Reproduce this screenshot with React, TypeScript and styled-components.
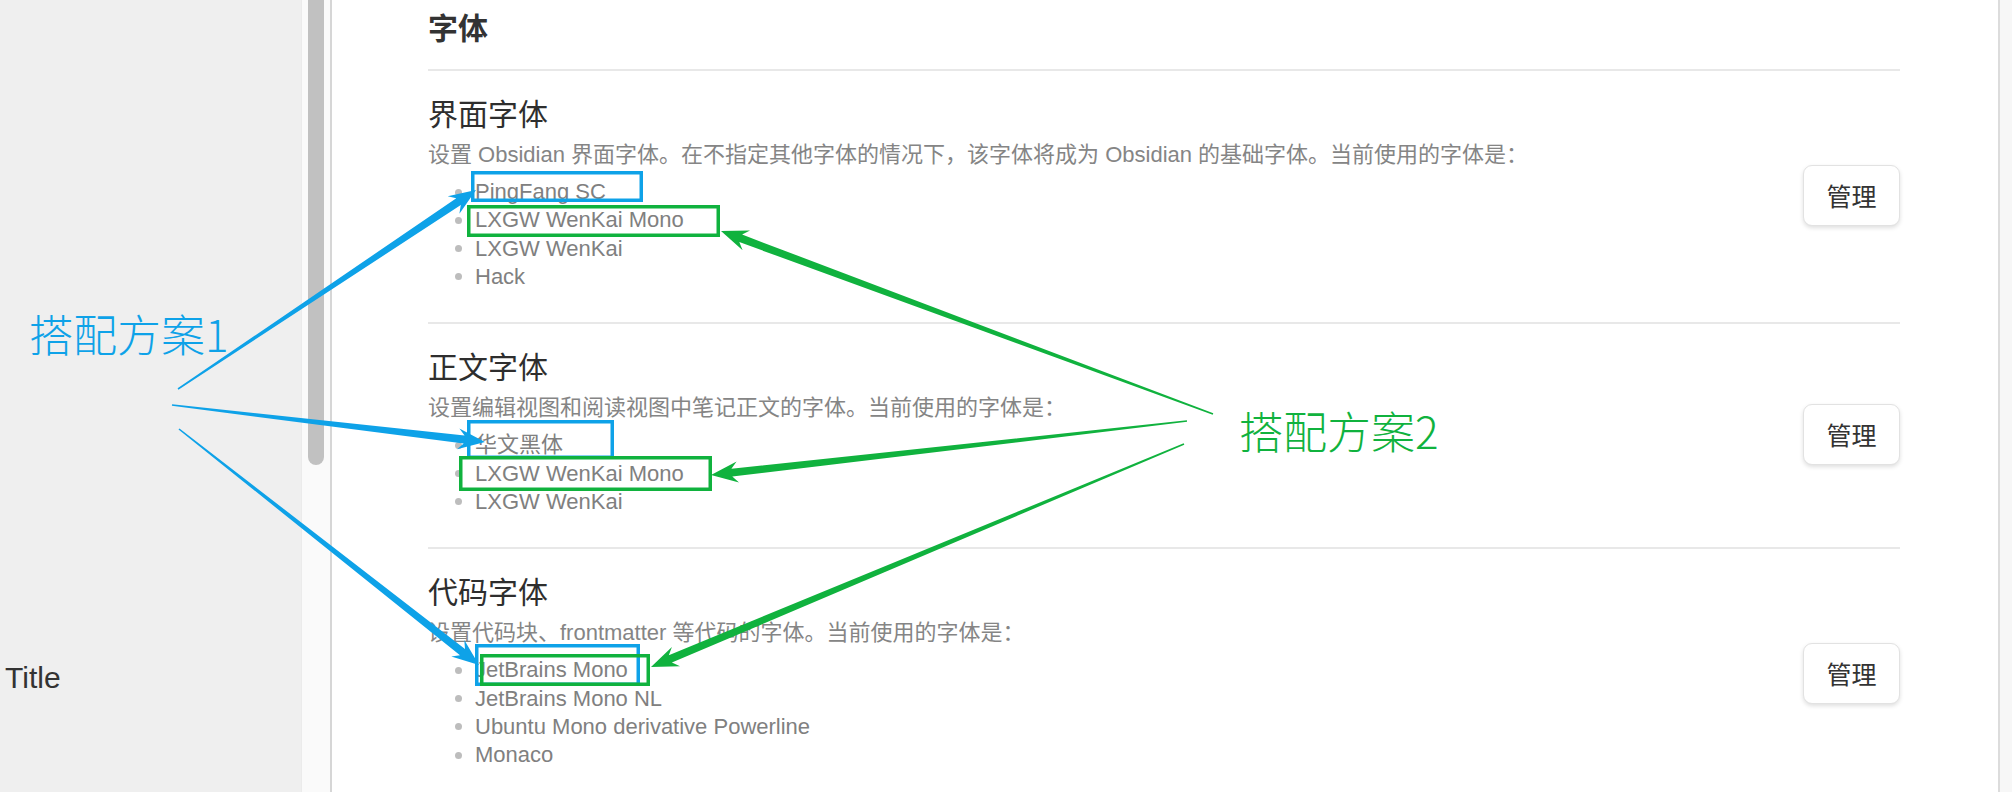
import React from 'react'
import styled, { createGlobalStyle } from 'styled-components'

type FontSetting = {
    name: string
    description: string
    fonts: Array<string>
}

type Arrow = {
    from: [number, number]
    to: [number, number]
    color: string
}

type Box = {
    x1: number
    y1: number
    x2: number
    y2: number
    color: string
}

const BLUE = '#0ea2e8'
const GREEN = '#10b23e'

const settings: Array<FontSetting> = [
    {
        name: '界面字体',
        description:
            '设置 Obsidian 界面字体。在不指定其他字体的情况下，该字体将成为 Obsidian 的基础字体。当前使用的字体是：',
        fonts: ['PingFang SC', 'LXGW WenKai Mono', 'LXGW WenKai', 'Hack'],
    },
    {
        name: '正文字体',
        description: '设置编辑视图和阅读视图中笔记正文的字体。当前使用的字体是：',
        fonts: ['华文黑体', 'LXGW WenKai Mono', 'LXGW WenKai'],
    },
    {
        name: '代码字体',
        description: '设置代码块、frontmatter 等代码的字体。当前使用的字体是：',
        fonts: ['JetBrains Mono', 'JetBrains Mono NL', 'Ubuntu Mono derivative Powerline', 'Monaco'],
    },
]

const boxes: Array<Box> = [
    { x1: 471, y1: 171, x2: 643, y2: 202, color: BLUE },
    { x1: 467, y1: 205, x2: 720, y2: 237, color: GREEN },
    { x1: 467, y1: 420, x2: 614, y2: 459, color: BLUE },
    { x1: 459, y1: 456, x2: 712, y2: 491, color: GREEN },
    { x1: 475, y1: 644, x2: 640, y2: 686, color: BLUE },
    { x1: 480, y1: 654, x2: 650, y2: 686, color: GREEN },
]

const arrows: Array<Arrow> = [
    { from: [178, 389], to: [476, 190], color: BLUE },
    { from: [172, 405], to: [485, 442], color: BLUE },
    { from: [179, 429], to: [479, 665], color: BLUE },
    { from: [1213, 414], to: [721, 231], color: GREEN },
    { from: [1187, 421], to: [711, 475], color: GREEN },
    { from: [1184, 444], to: [651, 667], color: GREEN },
]

const GlobalStyle = createGlobalStyle`
    html, body {
        margin: 0;
        padding: 0;
        background: #ffffff;
        overflow: hidden;
    }
`

const Page = styled.div`
    position: relative;
    display: flex;
    width: 2012px;
    height: 792px;
    overflow: hidden;
    font-family: 'Liberation Sans', 'Noto Sans CJK SC', sans-serif;
`

const Sidebar = styled.div`
    width: 301px;
    flex-shrink: 0;
    background: #efefef;
    padding-top: 660px;
    box-sizing: border-box;
`

const NavTitle = styled.div`
    padding-left: 5px;
    font-size: 30px;
    line-height: 36px;
    color: #333333;
`

const ScrollTrack = styled.div`
    width: 29px;
    flex-shrink: 0;
    box-sizing: border-box;
    background: #fafafa;
    border-left: 1px solid #ebebeb;
    padding-left: 6px;
`

const ScrollThumb = styled.div`
    width: 16px;
    height: 465px;
    background: #c1c1c1;
    border-radius: 0 0 8px 8px;
`

const SettingsPane = styled.div`
    flex: 1;
    background: #ffffff;
    border-left: 2px solid #d6d6d6;
    border-right: 2px solid #dcdcdc;
    padding: 0 98px 0 96px;
`

const Gutter = styled.div`
    width: 12px;
    flex-shrink: 0;
    background: #f7f7f7;
`

const SectionHeading = styled.div`
    padding: 8px 0 25px;
    font-size: 30px;
    line-height: 36px;
    font-weight: 700;
    color: #333333;
    font-family: 'Noto Sans CJK SC', sans-serif;
`

const SettingItem = styled.div`
    display: flex;
    align-items: center;
    border-top: 2px solid #e8e8e8;
    padding: 23px 0 31px;
`

const SettingInfo = styled.div`
    flex: 1;
`

const SettingName = styled.div`
    font-size: 30px;
    line-height: 36px;
    color: #2e2e2e;
    font-family: 'Noto Sans CJK SC', sans-serif;
`

const SettingDesc = styled.div`
    margin-top: 10px;
    font-size: 22px;
    line-height: 30px;
    color: #858585;
`

const FontList = styled.ul`
    list-style: none;
    margin: 8px 0 0;
    padding: 0;
`

const FontItem = styled.li`
    position: relative;
    padding-left: 47px;
    font-size: 22px;
    line-height: 28.33px;
    color: #808080;

    &::before {
        content: '';
        position: absolute;
        left: 27px;
        top: 10.5px;
        width: 7px;
        height: 7px;
        border-radius: 50%;
        background: #bdbdbd;
    }
`

const ManageButton = styled.button`
    width: 97px;
    height: 61px;
    margin-top: 5px;
    flex-shrink: 0;
    background: #ffffff;
    border: 1px solid #e2e2e2;
    border-radius: 9px;
    box-shadow: 0 2px 4px rgba(0, 0, 0, 0.13);
    font-family: 'Noto Sans CJK SC', sans-serif;
    font-size: 25px;
    color: #333333;
    cursor: pointer;
`

const AnnotationLayer = styled.svg`
    position: absolute;
    left: 0;
    top: 0;
    pointer-events: none;
`

const CalloutLabel = styled.div<{ $color: string; $left: number; $top: number }>`
    position: absolute;
    left: ${(p) => p.$left}px;
    top: ${(p) => p.$top}px;
    font-family: 'Noto Sans CJK SC', sans-serif;
    font-weight: 300;
    font-size: 44px;
    line-height: 44px;
    color: ${(p) => p.$color};
    white-space: nowrap;
`

// tapered arrow, thin at the tail and wider towards the head
const arrowPoints = ({ from, to }: Arrow): string => {
    const [x1, y1] = from
    const [x2, y2] = to
    const len = Math.hypot(x2 - x1, y2 - y1)
    const ux = (x2 - x1) / len
    const uy = (y2 - y1) / len
    const nx = -uy
    const ny = ux
    const w0 = 0.8
    const w1 = 4
    const headLen = 27
    const headHalf = 10.5
    const bx = x2 - ux * headLen
    const by = y2 - uy * headLen
    const ix = x2 - ux * (headLen - 6)
    const iy = y2 - uy * (headLen - 6)
    const pts = [
        [x1 + nx * w0, y1 + ny * w0],
        [ix + nx * w1, iy + ny * w1],
        [bx + nx * headHalf, by + ny * headHalf],
        [x2, y2],
        [bx - nx * headHalf, by - ny * headHalf],
        [ix - nx * w1, iy - ny * w1],
        [x1 - nx * w0, y1 - ny * w0],
    ]
    return pts.map(([x, y]) => `${x.toFixed(1)},${y.toFixed(1)}`).join(' ')
}

const Annotations = (): React.ReactElement => (
    <>
        <AnnotationLayer width={2012} height={792} viewBox="0 0 2012 792">
            {boxes.map((b, i) => (
                <rect
                    key={`box-${i}`}
                    x={b.x1 + 1.75}
                    y={b.y1 + 1.75}
                    width={b.x2 - b.x1 - 3.5}
                    height={b.y2 - b.y1 - 3.5}
                    fill="none"
                    stroke={b.color}
                    strokeWidth={3.5}
                />
            ))}
            {arrows.map((a, i) => (
                <polygon key={`arrow-${i}`} points={arrowPoints(a)} fill={a.color} />
            ))}
        </AnnotationLayer>
        <CalloutLabel $color={BLUE} $left={29} $top={311}>
            搭配方案1
        </CalloutLabel>
        <CalloutLabel $color={GREEN} $left={1239} $top={408}>
            搭配方案2
        </CalloutLabel>
    </>
)

export default function App(): React.ReactElement {
    return (
        <Page>
            <GlobalStyle />
            <Sidebar>
                <NavTitle>Title</NavTitle>
            </Sidebar>
            <ScrollTrack>
                <ScrollThumb />
            </ScrollTrack>
            <SettingsPane>
                <SectionHeading>字体</SectionHeading>
                {settings.map((setting) => (
                    <SettingItem key={setting.name}>
                        <SettingInfo>
                            <SettingName>{setting.name}</SettingName>
                            <SettingDesc>{setting.description}</SettingDesc>
                            <FontList>
                                {setting.fonts.map((font) => (
                                    <FontItem key={font}>{font}</FontItem>
                                ))}
                            </FontList>
                        </SettingInfo>
                        <ManageButton>管理</ManageButton>
                    </SettingItem>
                ))}
            </SettingsPane>
            <Gutter />
            <Annotations />
        </Page>
    )
}
